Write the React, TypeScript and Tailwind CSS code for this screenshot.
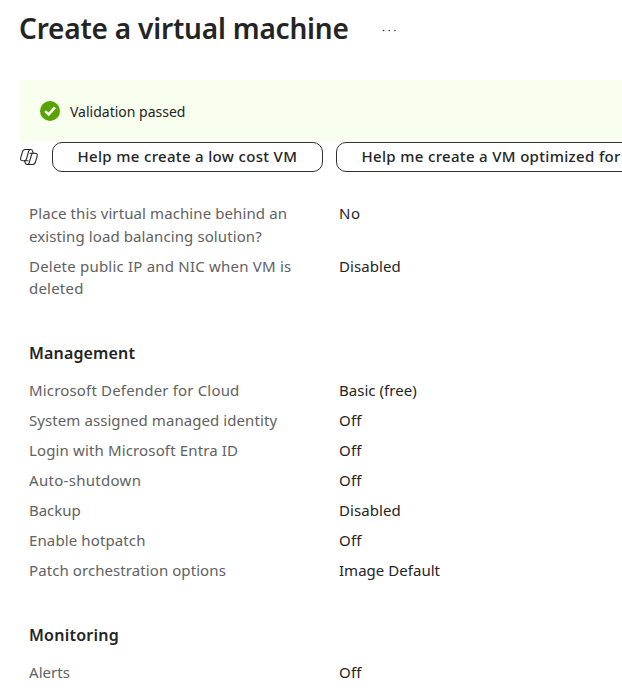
function CopilotIcon() {
  return (
    <svg className="h-[18px] w-[20px] shrink-0" viewBox="0 0 20 18" fill="none" stroke="#242424" strokeWidth="1.1" strokeLinejoin="round" strokeLinecap="round">
      <path d="M5.6 1.5H11.6C12.9 1.5 13.4 2.3 13.7 3.4L14.2 5.2H15.8C18 5.2 18.7 6.4 18.2 8.2L16.6 13.7C16.1 15.5 15.3 16.5 13.6 16.5H8.3C7 16.5 6.4 15.7 6.1 14.6L5.6 12.8H4.1C1.9 12.8 1.2 11.6 1.7 9.8L3.3 4.3C3.8 2.5 4.4 1.5 6.1 1.5" />
      <path d="M11.6 1.5C10.4 1.5 9.9 2.3 9.6 3.4L7.5 10.9C7.2 12.1 6.7 12.8 5.6 12.8" />
      <path d="M8.3 16.5C9.5 16.5 10 15.7 10.3 14.6L12.4 7.1C12.7 5.9 13.2 5.2 14.2 5.2H11M9 12.8H5.6" />
    </svg>
  );
}

function SuccessIcon() {
  return (
    <svg className="h-5 w-5 shrink-0" viewBox="0 0 20 20">
      <circle cx="10" cy="10" r="10" fill="#57a300" />
      <path d="M5.2 10.1L8.7 13.4L14.9 6.4" fill="none" stroke="#fff" strokeWidth="2.6" />
    </svg>
  );
}

type RowProps = { label: string[]; value: string; tracking: string; valueTracking?: string; leading?: string };

function Row({ label, value, tracking, valueTracking = "tracking-[0.03px]", leading = "leading-[22px]" }: RowProps) {
  return (
    <div className={`flex items-start ${leading}`}>
      <dt className={`w-[310px] shrink-0 text-[#616161] ${tracking}`}>
        {label.map((line) => (
          <span key={line} className="block whitespace-nowrap">{line}</span>
        ))}
      </dt>
      <dd className={`text-[#242424] ${valueTracking}`}>{value}</dd>
    </div>
  );
}

const management: RowProps[] = [
  { label: ["Microsoft Defender for Cloud"], value: "Basic (free)", tracking: "tracking-[0.17px]" },
  { label: ["System assigned managed identity"], value: "Off", tracking: "tracking-[0.075px]", valueTracking: "tracking-[0.2px]" },
  { label: ["Login with Microsoft Entra ID"], value: "Off", tracking: "tracking-[0.14px]", valueTracking: "tracking-[0.2px]" },
  { label: ["Auto-shutdown"], value: "Off", tracking: "tracking-[0.3px]", valueTracking: "tracking-[0.2px]" },
  { label: ["Backup"], value: "Disabled", tracking: "tracking-[-0.05px]", valueTracking: "tracking-[0.08px]" },
  { label: ["Enable hotpatch"], value: "Off", tracking: "tracking-[0.12px]", valueTracking: "tracking-[0.2px]" },
  { label: ["Patch orchestration options"], value: "Image Default", tracking: "tracking-[0.08px]" },
];

const pill = "flex h-[30px] shrink-0 items-center rounded-[10px] border border-[#323130] bg-white pb-[2px] pl-[24.5px] text-[15px] font-medium tracking-[0.33px] text-[#242424] whitespace-nowrap";

export default function App() {
  return (
    <main className="h-[696px] w-[622px] overflow-hidden bg-white font-['Noto_Sans','Open_Sans',sans-serif] text-[15px] leading-[22px] text-[#242424]">
      <header className="flex h-20 items-start pt-[9px] pl-[19px]">
        <h1 className="w-[363px] text-[28px] leading-[38px] font-semibold tracking-[-0.2px] whitespace-nowrap">Create a virtual machine</h1>
        <button aria-label="More" className="mt-[20px]">
          <svg className="h-[3px] w-[15px]" viewBox="0 0 15 3" fill="#323130">
            <circle cx="1.5" cy="1.5" r="0.8" />
            <circle cx="7.3" cy="1.5" r="0.8" />
            <circle cx="13" cy="1.5" r="0.8" />
          </svg>
        </button>
      </header>

      <div className="ml-[19px] flex h-[62px] items-center gap-[10px] bg-[#f8ffef] pl-[21px] text-[14px]">
        <SuccessIcon />
        <span className="pt-[2px]">Validation passed</span>
      </div>

      <div className="flex items-center pl-[19px]">
        <CopilotIcon />
        <button className={`ml-[13px] ${pill} w-[271px]`}>Help me create a low cost VM</button>
        <button className={`ml-[13px] ${pill} w-[320px]`}>Help me create a VM optimized for</button>
      </div>

      <div className="pt-[30px] pl-[29px]">
        <dl className="flex flex-col gap-[7px]">
          <Row label={["Place this virtual machine behind an", "existing load balancing solution?"]} value="No" tracking="tracking-[0.1px]" valueTracking="tracking-[0.5px]" leading="leading-[23px]" />
          <Row label={["Delete public IP and NIC when VM is", "deleted"]} value="Disabled" tracking="tracking-[0.21px]" valueTracking="tracking-[0.08px]" />
        </dl>

        <h2 className="mt-[43px] text-[16px] leading-[22px] font-semibold tracking-[0.15px]">Management</h2>
        <dl className="mt-[15px] flex flex-col gap-2">
          {management.map((row) => <Row key={row.label[0]} {...row} />)}
        </dl>

        <h2 className="mt-[43px] text-[16px] leading-[22px] font-semibold tracking-[0.25px]">Monitoring</h2>
        <dl className="mt-[15px]">
          <Row label={["Alerts"]} value="Off" tracking="tracking-[0.06px]" valueTracking="tracking-[0.2px]" />
        </dl>
      </div>
    </main>
  );
}
